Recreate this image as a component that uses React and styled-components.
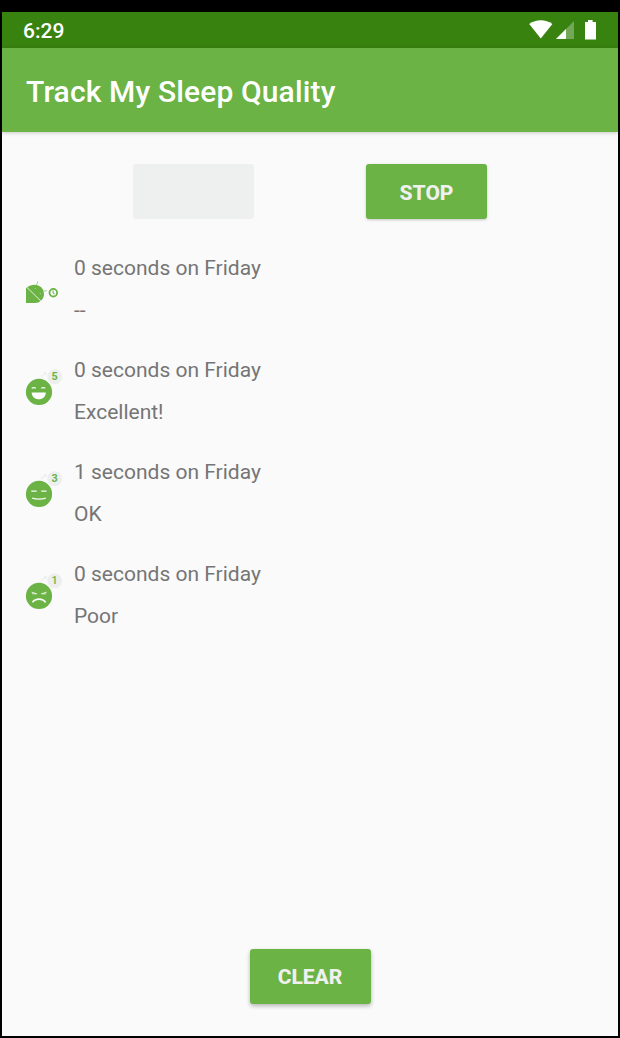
import React from 'react';
import styled, { createGlobalStyle } from 'styled-components';

const GlobalStyle = createGlobalStyle`
  * { box-sizing: border-box; }
  body { margin: 0; background: #000; font-family: Roboto, "Liberation Sans", sans-serif; }
`;

const Device = styled.div`
  width: 620px;
  height: 1038px;
  padding: 12px 2px 2px;
  background: #000;
`;

const Screen = styled.div`
  height: 100%;
  display: flex;
  flex-direction: column;
  background: #fafafa;
`;

const StatusBar = styled.div`
  height: 36px;
  flex: none;
  display: flex;
  align-items: center;
  justify-content: space-between;
  padding: 1px 20px 0 21px;
  background: #38820f;
  color: #fff;
  font-size: 21px;
  font-weight: 500;
`;

const StatusIcons = styled.svg`
  display: block;
  width: 70px;
  height: 22px;
`;

const AppBar = styled.header`
  height: 84px;
  flex: none;
  display: flex;
  align-items: center;
  padding: 3px 24px 0;
  background: #6ab344;
  box-shadow: 0 1px 4px rgba(0, 0, 0, 0.2);
`;

const Title = styled.h1`
  margin: 0;
  color: #fff;
  font-size: 30px;
  font-weight: 500;
  line-height: 36px;
  letter-spacing: 0.14px;
`;

const Actions = styled.div`
  display: flex;
  justify-content: center;
  gap: 112px;
  padding: 32px 0 27px;
`;

const Button = styled.button`
  width: 121px;
  height: 55px;
  padding: ${(p) => (p.$raised ? '0' : '2px 0 0')};
  border: 0;
  border-radius: 3px;
  background: ${(p) => (p.disabled ? '#eef0ef' : '#6ab344')};
  color: ${(p) => (p.disabled ? '#f0eff0' : '#f0f0f0')};
  box-shadow: ${(p) => (p.disabled ? 'none' : p.$raised ? '0 2px 4px rgba(0, 0, 0, 0.28)' : '0 1px 3px rgba(0, 0, 0, 0.2)')};
  font: 800 21px Roboto, "Liberation Sans", sans-serif;
`;

const NightList = styled.ul`
  flex: 1;
  display: flex;
  flex-direction: column;
  gap: 18px;
  margin: 0;
  padding: 0 24px;
  list-style: none;
`;

const NightRow = styled.li`
  display: flex;
  gap: 12px;
  height: 84px;
`;

const NightIcon = styled.svg`
  flex: none;
  width: 36px;
  height: 40px;
  margin-top: 20px;
  overflow: visible;
`;

const NightText = styled.div`
  padding-top: 1px;
  color: #757575;
  font-size: 21px;
  line-height: 42px;
`;

const Footer = styled.footer`
  display: flex;
  justify-content: center;
  padding-bottom: 32px;
`;

function Mouth({ quality }) {
  if (quality === 5) {
    return (
      <>
        <path d="M5.7 20.2q2-1.1 4.2 0M15.1 20.2q2.2-1.1 4.3 0" fill="none" stroke="#fafafa" strokeWidth="1.1" />
        <path d="M5.7 24.5h14.1c0 4.2-3.1 6.8-7 6.8s-7.1-2.6-7.1-6.8z" fill="#fff" />
      </>
    );
  }
  if (quality === 3) {
    return (
      <g fill="none" stroke="#fafafa" strokeWidth="1.2">
        <path d="M5.3 21.2h5.4M15.2 21.2h5.3" />
        <path d="M6.2 28.1q6.8 2 13.6 0" strokeWidth="1.4" />
      </g>
    );
  }
  return (
    <g fill="none" stroke="#fafafa" strokeWidth="1.2">
      <path d="M5.5 20.1l5.2 1.7H6.1M20.7 20.1l-5.2 1.7h4.6" strokeWidth="0.8" />
      <path d="M6.5 30.4q2.1-3.2 6.5-3.2t6.6 3.2" strokeWidth="1.7" />
    </g>
  );
}

function SleepFace({ quality }) {
  return (
    <NightIcon viewBox="0 0 36 40">
      <g fill="#edeeee">
        <circle cx="28.7" cy="8.7" r="7.4" />
        <circle cx="19.2" cy="5.4" r="1.7" />
        <circle cx="16.2" cy="7.8" r="1.2" />
        <circle cx="14.4" cy="10.2" r="0.8" />
      </g>
      <circle cx="13" cy="23.9" r="13.1" fill="#6ab344" />
      <Mouth quality={quality} />
      <text x="28.6" y="12.3" fill="#6ab344" fontFamily="Roboto, sans-serif" fontSize="10.8" fontWeight={quality === 1 ? 500 : 700} textAnchor="middle">
        {quality}
      </text>
    </NightIcon>
  );
}

function SleepActive() {
  return (
    <NightIcon viewBox="0 0 36 40">
      <path d="M0 22.2Q3.4 18.7 8.8 18.7A9.2 9 0 0 1 18 27.7A9.2 9.2 0 0 1 14.6 35Q12.8 36.9 9 36.9H0z" fill="#6ab344" />
      <path d="M1 21.5l14.5 14.2" stroke="#e4f0dd" strokeWidth="1" />
      <path d="M10.5 19.3l1.3-3.8M17.3 25.4l3.4-1" stroke="#8bc36d" strokeWidth="0.8" />
      <circle cx="9.2" cy="22.6" r="0.5" fill="#b5d8a2" />
      <circle cx="14.3" cy="27.5" r="0.5" fill="#b5d8a2" />
      <circle cx="27.3" cy="26.7" r="3.8" fill="#fafafa" stroke="#6ab344" strokeWidth="1.8" />
      <path d="M27.1 24.3v2.8l1.8 1" fill="none" stroke="#6ab344" strokeWidth="1" />
    </NightIcon>
  );
}

const nights = [
  { length: '0 seconds on Friday', label: '--' },
  { length: '0 seconds on Friday', label: 'Excellent!', quality: 5 },
  { length: '1 seconds on Friday', label: 'OK', quality: 3 },
  { length: '0 seconds on Friday', label: 'Poor', quality: 1 },
];

export default function App() {
  return (
    <Device>
      <GlobalStyle />
      <Screen>
        <StatusBar>
          <span>6:29</span>
          <StatusIcons viewBox="0 0 70 22" fill="#fff">
            <path d="M1.2 3.9C8.3-1 17.4-1 24.4 3.9L12.8 18.5z" />
            <path d="M46 1v18H28z" opacity="0.3" />
            <path d="M38 9v10H28z" />
            <path d="M60 0h4.6v2H68v17.6H57V2h3z" />
          </StatusIcons>
        </StatusBar>
        <AppBar>
          <Title>Track My Sleep Quality</Title>
        </AppBar>
        <Actions>
          <Button disabled>START</Button>
          <Button>STOP</Button>
        </Actions>
        <NightList>
          {nights.map((night, i) => (
            <NightRow key={i}>
              {night.quality ? <SleepFace quality={night.quality} /> : <SleepActive />}
              <NightText>
                <div>{night.length}</div>
                <div>{night.label}</div>
              </NightText>
            </NightRow>
          ))}
        </NightList>
        <Footer>
          <Button $raised>CLEAR</Button>
        </Footer>
      </Screen>
    </Device>
  );
}
